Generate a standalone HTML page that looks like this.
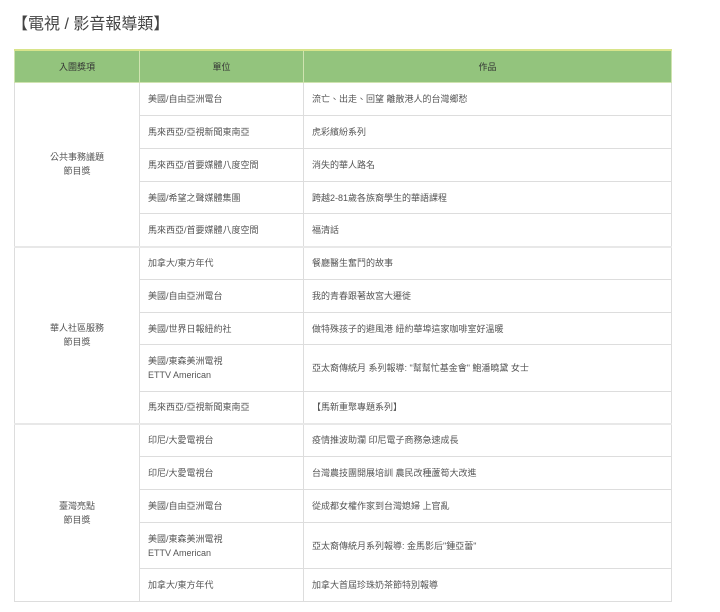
<!DOCTYPE html>
<html><head><meta charset="utf-8"><style>
body{margin:0;background:#fff;font-family:"Liberation Sans","Noto Sans CJK TC",sans-serif;color:#555;}
h1{position:absolute;left:12px;top:10px;margin:0;font-size:16px;font-weight:normal;color:#444;}
table{position:absolute;left:14px;top:49px;width:658px;border-collapse:collapse;font-size:9px;table-layout:fixed;}
td,th{border:1px solid #ddd;padding:0 8px;text-align:left;line-height:14px;}
th{background:#93c47d;color:#333;font-weight:normal;text-align:center;height:31px;border-color:#cfe3b0;border-top:2px solid #d8e48a;}
td.g{text-align:center;}
tr.s td{border-top:2px solid #e8e8e8;}
</style></head><body>
<h1>【電視 / 影音報導類】</h1>
<table>
<colgroup><col style="width:125px"><col style="width:164px"><col></colgroup>
<tr><th>入圍獎項</th><th>單位</th><th>作品</th></tr>
<tr style="height:33px"><td class="g" rowspan="5">公共事務議題<br>節目獎</td><td>美國/自由亞洲電台</td><td>流亡、出走、回望 離散港人的台灣鄉愁</td></tr>
<tr style="height:33px"><td>馬來西亞/亞視新聞東南亞</td><td>虎彩繽紛系列</td></tr>
<tr style="height:33px"><td>馬來西亞/首要媒體八度空間</td><td>消失的華人路名</td></tr>
<tr style="height:32px"><td>美國/希望之聲媒體集團</td><td>跨越2-81歲各族裔學生的華語課程</td></tr>
<tr style="height:33px"><td>馬來西亞/首要媒體八度空間</td><td>福清話</td></tr>
<tr class="s" style="height:33px"><td class="g" rowspan="5">華人社區服務<br>節目獎</td><td>加拿大/東方年代</td><td>餐廳醫生奮鬥的故事</td></tr>
<tr style="height:33px"><td>美國/自由亞洲電台</td><td>我的青春跟著故宮大遷徙</td></tr>
<tr style="height:32px"><td>美國/世界日報紐約社</td><td>做特殊孩子的避風港 紐約華埠這家咖啡室好溫暖</td></tr>
<tr style="height:47px"><td>美國/東森美洲電視<br>ETTV American</td><td>亞太裔傳統月 系列報導: "幫幫忙基金會" 鮑潘曉黛 女士</td></tr>
<tr style="height:32px"><td>馬來西亞/亞視新聞東南亞</td><td>【馬新重聚專題系列】</td></tr>
<tr class="s" style="height:33px"><td class="g" rowspan="5">臺灣亮點<br>節目獎</td><td>印尼/大愛電視台</td><td>疫情推波助瀾 印尼電子商務急速成長</td></tr>
<tr style="height:33px"><td>印尼/大愛電視台</td><td>台灣農技團開展培訓 農民改種蘆筍大改進</td></tr>
<tr style="height:33px"><td>美國/自由亞洲電台</td><td>從成都女權作家到台灣媳婦 上官亂</td></tr>
<tr style="height:46px"><td>美國/東森美洲電視<br>ETTV American</td><td>亞太裔傳統月系列報導: 金馬影后"鍾亞蕾"</td></tr>
<tr style="height:33px"><td>加拿大/東方年代</td><td>加拿大首屆珍珠奶茶節特別報導</td></tr>
</table>
</body></html>
